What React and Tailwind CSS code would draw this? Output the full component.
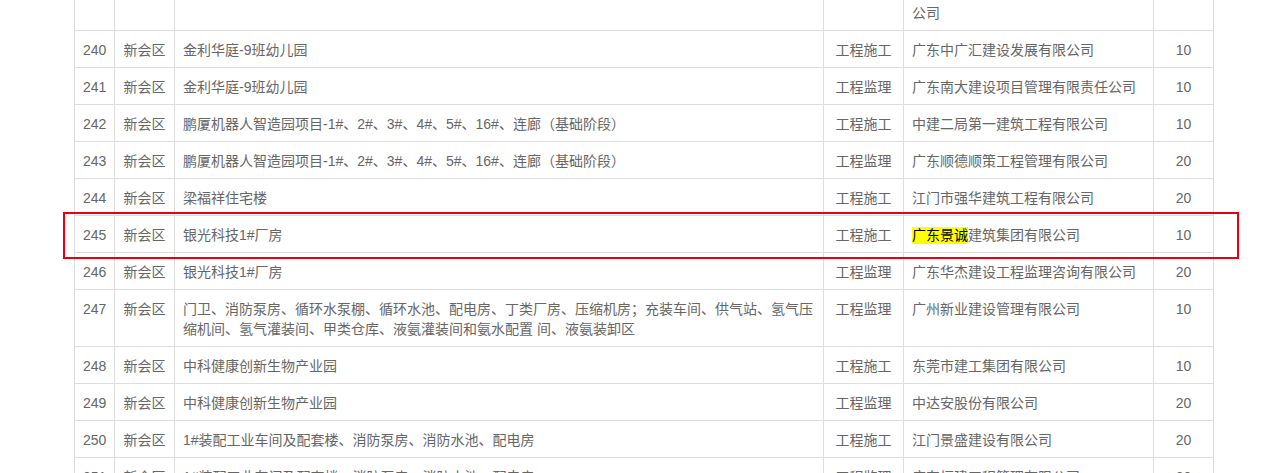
import React from 'react';

const rows = [
  { no: 240, area: '新会区', name: '金利华庭-9班幼儿园', type: '工程施工', company: '广东中广汇建设发展有限公司', score: 10 },
  { no: 241, area: '新会区', name: '金利华庭-9班幼儿园', type: '工程监理', company: '广东南大建设项目管理有限责任公司', score: 10 },
  { no: 242, area: '新会区', name: '鹏厦机器人智造园项目-1#、2#、3#、4#、5#、16#、连廊（基础阶段）', type: '工程施工', company: '中建二局第一建筑工程有限公司', score: 10 },
  { no: 243, area: '新会区', name: '鹏厦机器人智造园项目-1#、2#、3#、4#、5#、16#、连廊（基础阶段）', type: '工程监理', company: '广东顺德顺策工程管理有限公司', score: 20 },
  { no: 244, area: '新会区', name: '梁福祥住宅楼', type: '工程施工', company: '江门市强华建筑工程有限公司', score: 20 },
  { no: 245, area: '新会区', name: '银光科技1#厂房', type: '工程施工', company: '建筑集团有限公司', mark: '广东景诚', score: 10 },
  { no: 246, area: '新会区', name: '银光科技1#厂房', type: '工程监理', company: '广东华杰建设工程监理咨询有限公司', score: 20 },
  { no: 247, area: '新会区', name: '门卫、消防泵房、循环水泵棚、循环水池、配电房、丁类厂房、压缩机房；充装车间、供气站、氢气压缩机间、氢气灌装间、甲类仓库、液氨灌装间和氨水配置 间、液氨装卸区', type: '工程监理', company: '广州新业建设管理有限公司', score: 10 },
  { no: 248, area: '新会区', name: '中科健康创新生物产业园', type: '工程施工', company: '东莞市建工集团有限公司', score: 10 },
  { no: 249, area: '新会区', name: '中科健康创新生物产业园', type: '工程监理', company: '中达安股份有限公司', score: 20 },
  { no: 250, area: '新会区', name: '1#装配工业车间及配套楼、消防泵房、消防水池、配电房', type: '工程施工', company: '江门景盛建设有限公司', score: 20 },
  { no: 251, area: '新会区', name: '1#装配工业车间及配套楼、消防泵房、消防水池、配电房', type: '工程监理', company: '广东恒建工程管理有限公司', score: 20 },
];

const cell = 'border border-[#ddd] px-2 pt-[9px] pb-[7px] align-top';

export default function App() {
  return (
    <div
      className="relative h-[473px] overflow-hidden bg-white text-[14px] leading-5 text-[#666]"
      style={{ fontFamily: '"Liberation Sans", "Noto Sans CJK SC", sans-serif' }}
    >
      <table className="ml-[74px] -mt-[27px] w-[1139px] table-fixed border-collapse">
        <colgroup>
          <col className="w-[40px]" />
          <col className="w-[60px]" />
          <col className="w-[649px]" />
          <col className="w-[80px]" />
          <col className="w-[250px]" />
          <col className="w-[60px]" />
        </colgroup>
        <tbody>
          {/* previous row, scrolled mostly out of view: only the wrapped tail shows */}
          <tr>
            <td className={cell}></td>
            <td className={cell}></td>
            <td className={cell}></td>
            <td className={cell}></td>
            <td className={`${cell} text-left`}>
              <div className="pt-5">公司</div>
            </td>
            <td className={cell}></td>
          </tr>
          {rows.map((r) => (
            <tr key={r.no}>
              <td className={`${cell} text-center`}>{r.no}</td>
              <td className={`${cell} text-center`}>{r.area}</td>
              <td className={`${cell} text-left`}>{r.name}</td>
              <td className={`${cell} text-center`}>{r.type}</td>
              <td className={`${cell} text-left`}>
                {r.mark && (
                  <span className="inline-block bg-[#ffff00] leading-[17px] text-black">{r.mark}</span>
                )}
                {r.company}
              </td>
              <td className={`${cell} text-center`}>{r.score}</td>
            </tr>
          ))}
        </tbody>
      </table>

      {/* red highlight frame around row 245 */}
      <div className="pointer-events-none absolute left-[63px] top-[212px] h-[47px] w-[1176px] border-2 border-[#e60012]" />
    </div>
  );
}
